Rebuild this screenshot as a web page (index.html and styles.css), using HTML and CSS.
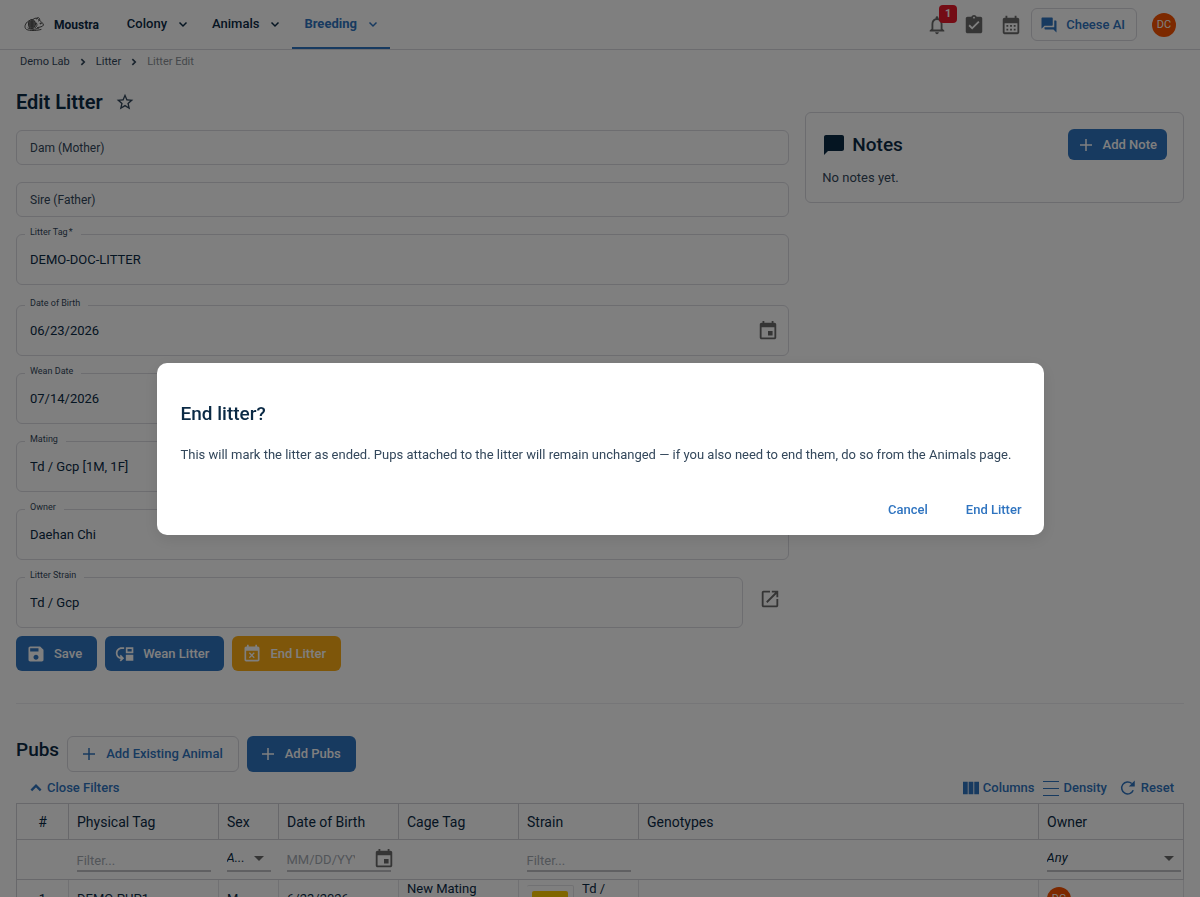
FILE: index.html
```
<!DOCTYPE html>
<html lang="en">
<head>
  <meta charset="UTF-8">
  <meta name="viewport" content="width=device-width, initial-scale=1.0">
  <title>Edit Litter - Moustra</title>
  <link rel="stylesheet" href="styles.css">
</head>
<body>

  <svg class="sprite" aria-hidden="true">
    <symbol id="chevron-down" viewBox="0 0 24 24"><path d="M5 9l7 7 7-7" fill="none" stroke="currentColor" stroke-width="3"/></symbol>
    <symbol id="chevron-right" viewBox="0 0 24 24"><path d="M8 5l7 7-7 7" fill="none" stroke="currentColor" stroke-width="4"/></symbol>
    <symbol id="chevron-up" viewBox="0 0 24 24"><path d="M4 16l8-8 8 8" fill="none" stroke="currentColor" stroke-width="4"/></symbol>
    <symbol id="plus" viewBox="0 0 24 24"><path d="M20 13h-7v7h-2v-7H4v-2h7V4h2v7h7v2z"/></symbol>
    <symbol id="event" viewBox="0 0 24 24"><path d="M17 12h-5v5h5v-5zM16 1v2H8V1H6v2H5c-1.11 0-1.99.9-1.99 2L3 19c0 1.1.89 2 2 2h14c1.1 0 2-.9 2-2V5c0-1.1-.9-2-2-2h-1V1h-2zm3 18H5V8h14v11z"/></symbol>
  </svg>

  <header class="topbar">
    <a class="brand" href="#">
      <svg class="brand-logo" viewBox="0 0 40 30" fill="none" stroke="#4a4a4a" stroke-width="2" stroke-linecap="round">
        <path d="M11 7C4 10 0 18 3 23c3 5 20 5 31 2"/>
        <path d="M8 22c5 3 13 4 22 0"/>
        <path d="M19 4c4-3 8-2 10 1 4 3 9 7 10 11-2 4-7 4-12 5"/>
        <ellipse cx="16" cy="14" rx="7" ry="9" fill="#8c8c8c"/>
        <path d="M12 10h8M11 14h9M12 18h8M16 6v16"/>
        <path d="M25 4c0-3 4-4 6-1 1 2 0 4-2 5M25 12c2 3 1 7-2 9"/>
        <circle cx="33" cy="13" r="1"/>
      </svg>
      <span>Moustra</span>
    </a>
    <nav class="nav">
      <a class="nav-item" href="#">Colony <svg class="icon-12"><use href="#chevron-down"/></svg></a>
      <a class="nav-item" href="#">Animals <svg class="icon-12"><use href="#chevron-down"/></svg></a>
      <a class="nav-item active" href="#">Breeding <svg class="icon-12"><use href="#chevron-down"/></svg></a>
    </nav>
    <div class="tools">
      <button class="icon-btn" type="button" aria-label="Notifications">
        <svg class="icon-22" viewBox="0 0 24 24"><path d="M12 22c1.1 0 2-.9 2-2h-4c0 1.1.89 2 2 2zm6-6v-5c0-3.07-1.63-5.64-4.5-6.32V4c0-.83-.67-1.5-1.5-1.5s-1.5.67-1.5 1.5v.68C7.64 5.36 6 7.92 6 11v5l-2 2v1h16v-1l-2-2zm-2 1H8v-6c0-2.48 1.51-4.5 4-4.5s4 2.02 4 4.5v6z"/></svg>
        <span class="badge">1</span>
      </button>
      <button class="icon-btn" type="button" aria-label="Tasks">
        <svg class="icon-22" viewBox="0 0 24 24"><path d="M19 3h-4.18C14.4 1.84 13.3 1 12 1c-1.3 0-2.4.84-2.82 2H5c-1.1 0-2 .9-2 2v14c0 1.1.9 2 2 2h14c1.1 0 2-.9 2-2V5c0-1.1-.9-2-2-2zm-7 0c.55 0 1 .45 1 1s-.45 1-1 1-1-.45-1-1 .45-1 1-1zm-2 14l-4-4 1.41-1.41L10 14.17l6.59-6.59L18 9l-8 8z"/></svg>
      </button>
      <button class="icon-btn" type="button" aria-label="Calendar">
        <svg class="icon-22" viewBox="0 0 24 24"><path d="M19 4h-1V2h-2v2H8V2H6v2H5c-1.11 0-1.99.9-1.99 2L3 20c0 1.1.89 2 2 2h14c1.1 0 2-.9 2-2V6c0-1.1-.9-2-2-2zm0 16H5V10h14v10zM9 14H7v-2h2v2zm4 0h-2v-2h2v2zm4 0h-2v-2h2v2zm-8 4H7v-2h2v2zm4 0h-2v-2h2v2zm4 0h-2v-2h2v2z"/></svg>
      </button>
      <button class="btn btn-outline btn-ai" type="button">
        <svg class="icon-18" viewBox="0 0 24 24"><path d="M21 6h-2v9H6v2c0 .55.45 1 1 1h11l4 4V7c0-.55-.45-1-1-1zm-4 6V3c0-.55-.45-1-1-1H3c-.55 0-1 .45-1 1v14l4-4h10c.55 0 1-.45 1-1z"/></svg>
        Cheese AI
      </button>
      <span class="avatar">DC</span>
    </div>
  </header>

  <main class="page">
    <nav class="breadcrumb" aria-label="Breadcrumb">
      <a href="#">Demo Lab</a>
      <svg class="icon-10"><use href="#chevron-right"/></svg>
      <a href="#">Litter</a>
      <svg class="icon-10"><use href="#chevron-right"/></svg>
      <span class="current">Litter Edit</span>
    </nav>

    <div class="grid">
      <form class="litter-form" id="litterForm">
        <div class="title-row">
          <h1>Edit Litter</h1>
          <button class="icon-btn star" type="button" aria-label="Add to favorites">
            <svg class="icon-20" viewBox="0 0 24 24"><path d="M22 9.24l-7.19-.62L12 2 9.19 8.63 2 9.24l5.46 4.73L5.82 21 12 17.27 18.18 21l-1.63-7.03L22 9.24zM12 15.4l-3.76 2.27 1-4.28-3.32-2.88 4.38-.38L12 6.1l1.71 4.04 4.38.38-3.32 2.88 1 4.28L12 15.4z"/></svg>
          </button>
        </div>

        <div class="fields">
          <input class="field field-small" type="text" aria-label="Dam (Mother)" placeholder="Dam (Mother)">
          <input class="field field-small" type="text" aria-label="Sire (Father)" placeholder="Sire (Father)">
          <div class="field-wrap spaced">
            <label for="litterTag">Litter Tag<span class="star-mark">*</span></label>
            <input class="field" id="litterTag" type="text" value="DEMO-DOC-LITTER">
          </div>
          <div class="field-wrap">
            <label for="dob">Date of Birth</label>
            <div class="field field-icon">
              <input id="dob" type="text" value="06/23/2026">
              <button class="icon-btn" type="button" aria-label="Choose date"><svg class="icon-22"><use href="#event"/></svg></button>
            </div>
          </div>
          <div class="field-wrap">
            <label for="weanDate">Wean Date</label>
            <input class="field" id="weanDate" type="text" value="07/14/2026">
          </div>
          <div class="field-wrap">
            <label for="mating">Mating</label>
            <input class="field" id="mating" type="text" value="Td / Gcp [1M, 1F]">
          </div>
          <div class="field-wrap">
            <label for="owner">Owner</label>
            <input class="field" id="owner" type="text" value="Daehan Chi">
          </div>
          <div class="strain-row">
            <div class="field-wrap">
              <label for="strain">Litter Strain</label>
              <input class="field" id="strain" type="text" value="Td / Gcp">
            </div>
            <button class="icon-btn" type="button" aria-label="Open strain">
              <svg class="icon-22" viewBox="0 0 24 24"><path d="M19 19H5V5h7V3H5c-1.11 0-2 .9-2 2v14c0 1.1.89 2 2 2h14c1.1 0 2-.9 2-2v-7h-2v7zM14 3v2h3.59l-9.83 9.83 1.41 1.41L19 6.41V10h2V3h-7z"/></svg>
            </button>
          </div>
        </div>

        <div class="actions">
          <button class="btn btn-primary" type="submit">
            <svg class="icon-20" viewBox="0 0 24 24"><path d="M17 3H5c-1.11 0-2 .9-2 2v14c0 1.1.89 2 2 2h14c1.1 0 2-.9 2-2V7l-4-4zm-5 16c-1.66 0-3-1.34-3-3s1.34-3 3-3 3 1.34 3 3-1.34 3-3 3zm3-10H5V5h10v4z"/></svg>
            Save
          </button>
          <button class="btn btn-primary" type="button">
            <svg class="icon-20" viewBox="0 0 24 24"><path d="M3 11c0 2.45 1.76 4.47 4.08 4.91l-1.49-1.49L7 13l4 4.01L7 21l-1.41-1.41 1.58-1.58v-.06C3.7 17.54 1 14.58 1 11c0-3.87 3.13-7 7-7h3v2H8c-2.76 0-5 2.24-5 5zm19 0V4h-9v7h9zm-2-2h-5V6h5v3zM13 13h9v7h-9z"/></svg>
            Wean Litter
          </button>
          <button class="btn btn-warning" type="button">
            <svg class="icon-20" viewBox="0 0 24 24"><path d="M9.31 17l2.44-2.44L14.19 17l1.06-1.06-2.44-2.44 2.44-2.44L14.19 10l-2.44 2.44L9.31 10l-1.06 1.06 2.44 2.44-2.44 2.44L9.31 17zM19 3h-1V1h-2v2H8V1H6v2H5c-1.11 0-1.99.9-1.99 2L3 19c0 1.1.89 2 2 2h14c1.1 0 2-.9 2-2V5c0-1.1-.9-2-2-2zm0 16H5V8h14v11z"/></svg>
            End Litter
          </button>
        </div>
      </form>

      <aside class="notes">
        <div class="notes-head">
          <h2>
            <svg class="icon-24" viewBox="0 0 24 24"><path d="M20 2H4c-1.1 0-2 .9-2 2v18l4-4h14c1.1 0 2-.9 2-2V4c0-1.1-.9-2-2-2z"/></svg>
            Notes
          </h2>
          <button class="btn btn-primary btn-note" type="button"><svg class="icon-18"><use href="#plus"/></svg>Add Note</button>
        </div>
        <p>No notes yet.</p>
      </aside>
    </div>

    <section class="pubs">
      <div class="pubs-head">
        <h2>Pubs</h2>
        <button class="btn btn-outline" type="button"><svg class="icon-18"><use href="#plus"/></svg>Add Existing Animal</button>
        <button class="btn btn-primary" type="button"><svg class="icon-18"><use href="#plus"/></svg>Add Pubs</button>
      </div>

      <div class="table-bar">
        <button class="link-btn" type="button"><svg class="icon-14"><use href="#chevron-up"/></svg>Close Filters</button>
        <div class="table-tools">
          <button class="link-btn" type="button"><svg class="icon-16" viewBox="3 3 18 18"><path d="M14.67 5v14H9.33V5h5.34zm1 14H21V5h-5.33v14zm-7.34 0V5H3v14h5.33z"/></svg>Columns</button>
          <button class="link-btn" type="button"><svg class="icon-16" viewBox="0 0 16 16"><path d="M0 1h16v1H0zM0 8h16v1H0zM0 15h16v1H0z"/></svg>Density</button>
          <button class="link-btn reset" type="button"><svg class="icon-18" viewBox="0 0 24 24"><path d="M19 15a8 8 0 1 1-2-9" fill="none" stroke="currentColor" stroke-width="2"/><path d="M21 2v8h-8z"/></svg>Reset</button>
        </div>
      </div>

      <table class="pubs-table">
        <colgroup>
          <col class="col-num"><col class="col-tag"><col class="col-sex"><col class="col-date"><col class="col-date"><col class="col-date"><col><col class="col-owner">
        </colgroup>
        <thead>
          <tr>
            <th class="num">#</th><th>Physical Tag</th><th>Sex</th><th>Date of Birth</th><th>Cage Tag</th><th>Strain</th><th>Genotypes</th><th>Owner</th>
          </tr>
          <tr class="filters">
            <td></td>
            <td><input class="filter" type="text" aria-label="Filter physical tag" placeholder="Filter..."></td>
            <td><div class="filter-select"><select aria-label="Filter sex"><option>A...</option></select></div></td>
            <td>
              <div class="filter filter-date">
                <input type="text" aria-label="Filter date of birth" placeholder="MM/DD/YYYY">
                <button class="icon-btn" type="button" aria-label="Choose filter date"><svg class="icon-22"><use href="#event"/></svg></button>
              </div>
            </td>
            <td></td>
            <td><input class="filter" type="text" aria-label="Filter strain" placeholder="Filter..."></td>
            <td></td>
            <td class="owner-filter"><div class="filter-select"><select aria-label="Filter owner"><option>Any</option></select></div></td>
          </tr>
        </thead>
        <tbody>
          <tr>
            <td class="num">1</td>
            <td>DEMO-PUP1</td>
            <td>M</td>
            <td>6/23/2026</td>
            <td class="wrap">New Mating<br>Cage</td>
            <td class="wrap"><div class="strain"><span class="swatch"><i></i></span><span>Td /<br>Gcp</span></div></td>
            <td></td>
            <td><span class="avatar">DC</span></td>
          </tr>
        </tbody>
      </table>
    </section>
  </main>

  <div class="backdrop">
    <div class="dialog" role="dialog" aria-modal="true" aria-labelledby="dialogTitle">
      <h2 id="dialogTitle">End litter?</h2>
      <p>This will mark the litter as ended. Pups attached to the litter will remain unchanged — if you also need to end them, do so from the Animals page.</p>
      <div class="dialog-actions">
        <button class="text-btn" type="button">Cancel</button>
        <button class="text-btn" type="button">End Litter</button>
      </div>
    </div>
  </div>

</body>
</html>
```

FILE: styles.css
```
* {
  box-sizing: border-box;
}

body {
  margin: 0;
  height: 100vh;
  overflow: hidden;
  background: #ffffff;
  color: #0b2a45;
  font-family: Roboto, "Liberation Sans", sans-serif;
  font-size: 13px;
  line-height: 20px;
}

a {
  color: inherit;
  text-decoration: none;
}

h1, h2, p {
  margin: 0;
}

button, input, select {
  font: inherit;
  color: inherit;
}

button {
  cursor: pointer;
}

svg {
  display: block;
  flex: none;
  fill: currentColor;
}

.sprite {
  display: none;
}

.icon-10 { width: 10px; height: 10px; }
.icon-12 { width: 12px; height: 12px; }
.icon-14 { width: 14px; height: 14px; }
.icon-16 { width: 16px; height: 16px; }
.icon-18 { width: 18px; height: 18px; }
.icon-20 { width: 20px; height: 20px; }
.icon-22 { width: 22px; height: 22px; }
.icon-24 { width: 24px; height: 24px; }

/* top bar */
.topbar {
  display: flex;
  align-items: center;
  height: 50px;
  padding: 0 24px;
  border-bottom: 1px solid #d8d8de;
}

.brand {
  display: flex;
  align-items: center;
  gap: 10px;
  font-size: 12px;
  font-weight: 700;
}

.brand-logo {
  width: 20px;
  height: 15px;
  fill: none;
}

.nav {
  display: flex;
  align-self: stretch;
  margin-left: 16px;
}

.nav-item {
  display: flex;
  align-items: center;
  gap: 10px;
  padding: 0 11px 0 12px;
  height: 49px;
  font-weight: 500;
  border-bottom: 2px solid transparent;
}

.nav-item.active {
  color: #2f74c0;
  font-weight: 700;
  border-color: #2f74c0;
}

.tools {
  display: flex;
  align-items: center;
  gap: 15px;
  margin-left: auto;
}

.icon-btn {
  position: relative;
  display: flex;
  padding: 0;
  border: none;
  background: none;
  color: #6b6b6b;
}

.badge {
  position: absolute;
  top: -9px;
  right: -9px;
  width: 18px;
  height: 18px;
  border-radius: 4px;
  background: #e8182a;
  color: #ffffff;
  font-size: 11px;
  font-weight: 700;
  line-height: 18px;
  text-align: center;
}

.btn {
  display: flex;
  align-items: center;
  gap: 8px;
  height: 35px;
  padding: 0 15px 0 10px;
  border: none;
  border-radius: 6px;
  font-weight: 500;
  white-space: nowrap;
}

.btn-primary {
  background: #2f74c0;
  color: #ffffff;
}

.btn-warning {
  background: #fcac14;
  color: #ffffff;
}

.btn-outline {
  border: 1px solid #d8d8de;
  background: none;
  color: #2f74c0;
}

.btn-ai {
  height: 33px;
  padding: 0 11px 0 8px;
  margin-left: -6px;
}

.avatar {
  display: block;
  width: 24px;
  height: 24px;
  border-radius: 50%;
  background: #f85200;
  color: #ffffff;
  font-size: 11px;
  line-height: 24px;
  text-align: center;
}

/* page */
.page {
  padding: 0 16px;
}

.breadcrumb {
  display: flex;
  align-items: center;
  gap: 8px;
  height: 24px;
  padding: 0 4px;
  color: #33475b;
  font-size: 11px;
}

.breadcrumb .current {
  color: #8a8f96;
}

.grid {
  display: grid;
  grid-template-columns: repeat(12, 1fr);
  column-gap: 16px;
  align-items: start;
}

.litter-form {
  grid-column: span 8;
}

.title-row {
  display: flex;
  align-items: center;
  gap: 12px;
  height: 56px;
}

h1 {
  font-size: 20px;
  font-weight: 600;
  line-height: 28px;
}

.star {
  color: #33475b;
}

.fields {
  display: flex;
  flex-direction: column;
  gap: 17px;
}

.field {
  display: block;
  width: 100%;
  height: 51px;
  padding: 0 13px;
  border: 1px solid #dadae0;
  border-radius: 6px;
  background: none;
}

.field-small {
  height: 35px;
}

.field::placeholder {
  color: #33475b;
  font-size: 12px;
  opacity: 1;
}

.field-icon {
  display: flex;
  align-items: center;
  padding: 0 9px 0 13px;
}

.field-icon input {
  flex: 1;
  padding: 0;
  border: none;
  background: none;
}

.field-wrap {
  position: relative;
  flex: 1;
}

.field-wrap.spaced {
  margin-bottom: 3px;
}

.field-wrap label {
  position: absolute;
  top: -8px;
  left: 9px;
  padding: 0 8px 0 5px;
  background: #ffffff;
  color: #33475b;
  font-size: 9px;
  line-height: 12px;
}

.star-mark {
  margin-left: 1px;
}

.strain-row {
  display: flex;
  align-items: center;
  gap: 16px;
}

.strain-row .icon-btn {
  padding: 0 8px 8px 0;
}

.actions {
  display: flex;
  gap: 8px;
  margin-top: 8px;
}

.notes {
  grid-column: span 4;
  margin-top: 38px;
  padding: 16px 16px 14px;
  border: 1px solid #d8d8de;
  border-radius: 6px;
}

.notes-head {
  display: flex;
  align-items: center;
  justify-content: space-between;
  margin-bottom: 8px;
}

.notes-head h2 {
  display: flex;
  align-items: center;
  gap: 6px;
}

h2 {
  font-size: 19px;
  font-weight: 500;
  line-height: 28px;
}

.btn-note {
  height: 31px;
  padding: 0 10px 0 9px;
}

.notes p {
  color: #33475b;
}

/* pubs table */
.pubs {
  margin-top: 32px;
  padding-top: 32px;
  border-top: 1px solid #ececf0;
}

.pubs-head {
  display: flex;
  align-items: flex-start;
  gap: 8px;
}

.pubs-head .btn {
  height: 36px;
  padding: 0 15px 0 12px;
}

.table-bar {
  display: flex;
  align-items: center;
  justify-content: space-between;
  height: 31px;
  padding: 0 10px 0 13px;
}

.link-btn {
  display: flex;
  align-items: center;
  gap: 4px;
  padding: 0;
  border: none;
  background: none;
  color: #2f74c0;
  font-weight: 500;
}

.table-tools {
  display: flex;
  gap: 9px;
}

.link-btn.reset {
  padding-left: 3px;
}

.pubs-table {
  width: 100%;
  table-layout: fixed;
  border-collapse: collapse;
  border: 1px solid #d0d0d6;
}

.col-num { width: 52px; }
.col-tag { width: 150px; }
.col-sex { width: 60px; }
.col-date { width: 120px; }
.col-owner { width: 145px; }

.pubs-table th {
  height: 36px;
  padding: 0 8px;
  border: 1px solid #d0d0d6;
  font-size: 14px;
  font-weight: 400;
  text-align: left;
}

.pubs-table .num {
  text-align: center;
}

.pubs-table td {
  padding: 0 8px;
}

.pubs-table .filters td {
  height: 40px;
  vertical-align: bottom;
  padding-bottom: 7px;
  border-bottom: 1px solid #d0d0d6;
}

.pubs-table .filters .owner-filter {
  padding-right: 2px;
}

.pubs-table tbody td {
  height: 36px;
  border-right: 1px solid #e2e2e6;
}

.pubs-table tbody .wrap {
  vertical-align: top;
  line-height: 18px;
}

.filter {
  display: block;
  width: 100%;
  height: 24px;
  padding: 2px 0 0;
  border: none;
  border-bottom: 2px solid #c0c0c4;
  background: none;
}

.filter::placeholder, .filter-date input::placeholder {
  color: #a5abb3;
  opacity: 1;
}

.filter-date {
  display: flex;
  align-items: center;
  gap: 18px;
  padding: 0;
}

.filter-date input {
  flex: 1;
  min-width: 0;
  padding: 2px 0 0;
  border: none;
  background: none;
}

.filter-date .icon-btn {
  margin: 0 -4px 0 0;
}

.filter-select {
  position: relative;
  border-bottom: 2px solid #c0c0c4;
}

.filter-select::after {
  content: "";
  position: absolute;
  top: 10px;
  right: 7px;
  border: 5px solid transparent;
  border-top-color: #6b6b6b;
  border-bottom: none;
}

.filter-select select {
  display: block;
  width: 100%;
  height: 24px;
  padding: 0;
  border: none;
  background: none;
  appearance: none;
  font-style: italic;
}

.strain {
  display: flex;
  gap: 8px;
}

.swatch {
  flex: none;
  width: 47px;
  margin-top: 5px;
  padding: 5px;
  border: 1px solid #e2e2e6;
  border-left: none;
  border-radius: 2px;
}

.swatch i {
  display: block;
  height: 20px;
  border-radius: 2px;
  background: #ffcc00;
}

/* confirm dialog */
.backdrop {
  position: fixed;
  inset: 0;
  display: flex;
  align-items: center;
  justify-content: center;
  background: rgba(0, 0, 0, 0.5);
}

.dialog {
  width: 887px;
  max-width: calc(100% - 64px);
  padding: 37px 8px 10px 24px;
  border-radius: 10px;
  background: #ffffff;
  box-shadow: 0 4px 16px rgba(0, 0, 0, 0.1);
}

.dialog p {
  margin: 17px 16px 30px 0;
  color: #33475b;
}

.dialog-actions {
  display: flex;
  justify-content: flex-end;
  gap: 10px;
}

.text-btn {
  height: 30px;
  padding: 0 14px;
  border: none;
  background: none;
  color: #2f74c0;
  font-weight: 500;
}
```
